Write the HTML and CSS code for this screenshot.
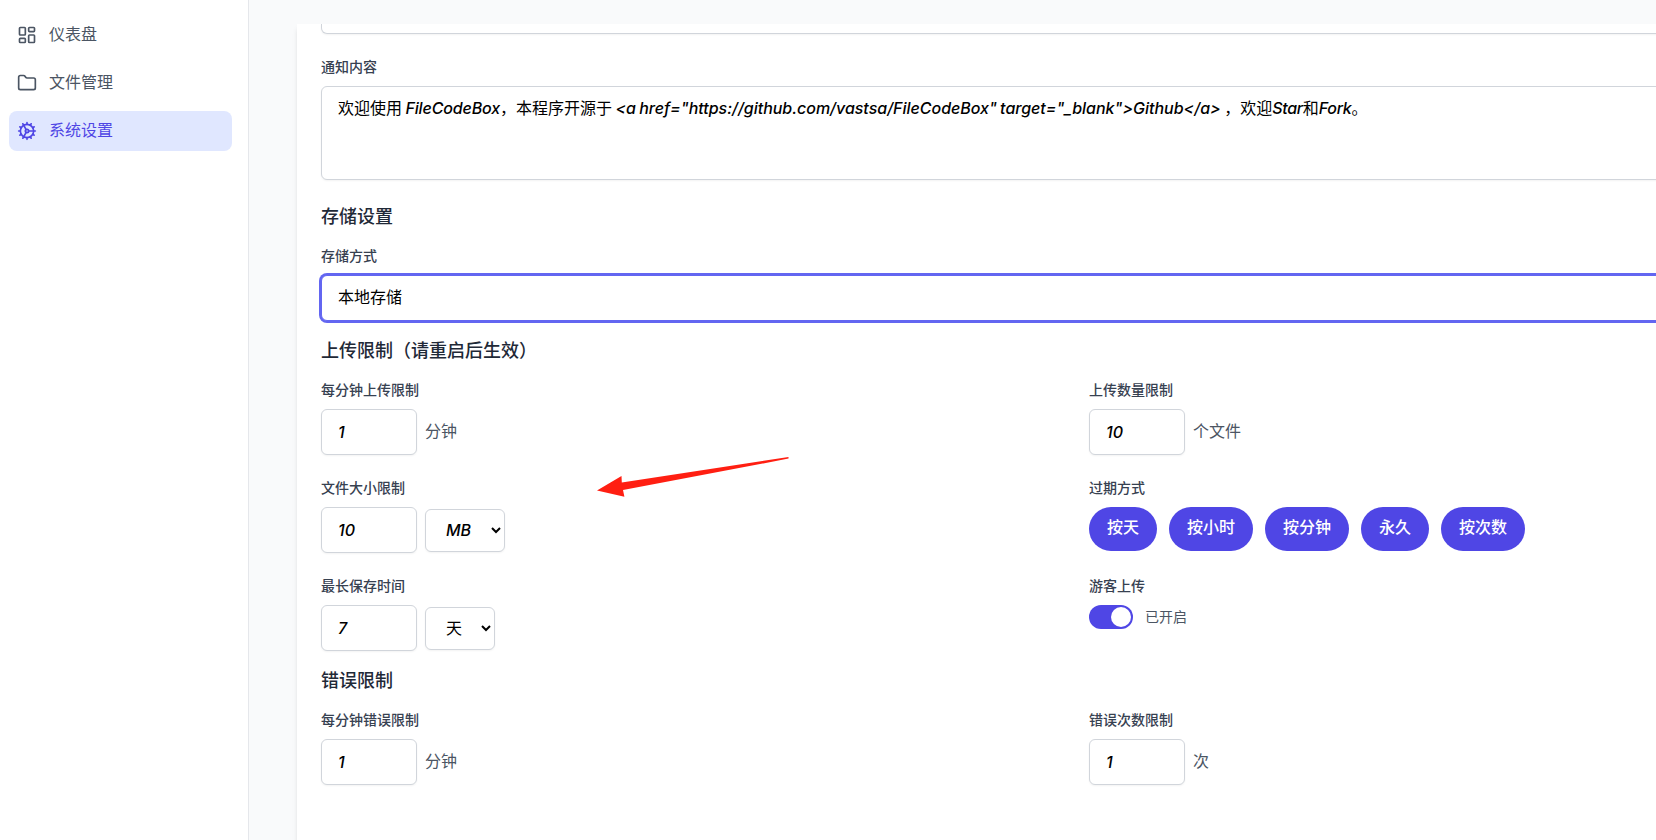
FILE: index.html
```html
<!DOCTYPE html>
<html lang="zh-CN">
<head>
    <meta charset="UTF-8">
    <meta name="viewport" content="width=device-width, initial-scale=1.0">
    <title>系统设置 - FileCodeBox</title>
    <link rel="stylesheet" href="styles.css">
</head>
<body>
    <div class="layout">
        <aside class="sidebar">
            <nav class="menu">
                <a class="menu-item">
                    <svg class="icon" viewBox="0 0 24 24">
                        <rect x="3" y="3" width="7" height="9" rx="1" />
                        <rect x="14" y="3" width="7" height="5" rx="1" />
                        <rect x="14" y="12" width="7" height="9" rx="1" />
                        <rect x="3" y="16" width="7" height="5" rx="1" />
                    </svg>
                    <span>仪表盘</span>
                </a>
                <a class="menu-item">
                    <svg class="icon" viewBox="0 0 24 24">
                        <path d="M20 20a2 2 0 0 0 2-2V8a2 2 0 0 0-2-2h-7.9a2 2 0 0 1-1.69-.9L9.6 3.9A2 2 0 0 0 7.93 3H4a2 2 0 0 0-2 2v13a2 2 0 0 0 2 2Z" />
                    </svg>
                    <span>文件管理</span>
                </a>
                <a class="menu-item active">
                    <svg class="icon" viewBox="0 0 24 24">
                        <path d="M12 20a8 8 0 1 0 0-16 8 8 0 0 0 0 16Z" />
                        <path d="M12 14a2 2 0 1 0 0-4 2 2 0 0 0 0 4Z" />
                        <path d="M12 2v2M12 22v-2M17 20.66l-1-1.73M11 10.27 7 3.34M20.66 17l-1.73-1M3.34 7l1.73 1M14 12h8M2 12h2M20.66 7l-1.73 1M3.34 17l1.73-1M17 3.34l-1 1.73M11 13.73l-4 6.93" />
                    </svg>
                    <span>系统设置</span>
                </a>
            </nav>
        </aside>

        <main class="content">
            <div class="card">
                <div class="input textarea-end"></div>

                <div class="field notice">
                    <label class="label">通知内容</label>
                    <div class="input textarea">欢迎使用 <span class="en en-name">FileCodeBox</span>，本程序开源于 <span class="en en-link">&lt;a href="https://github.com/vastsa/FileCodeBox" target="_blank"&gt;Github&lt;/a&gt;</span> ，欢迎<span class="en en-word">Star</span>和<span class="en en-word">Fork</span>。</div>
                </div>

                <h3 class="title">存储设置</h3>
                <div class="field">
                    <label class="label">存储方式</label>
                    <select class="input storage">
                        <option>本地存储</option>
                    </select>
                </div>

                <h3 class="title">上传限制（请重启后生效）</h3>
                <div class="grid">
                    <div class="field">
                        <label class="label">每分钟上传限制</label>
                        <div class="row">
                            <input class="input number" type="text" value="1">
                            <span class="unit">分钟</span>
                        </div>
                    </div>
                    <div class="field">
                        <label class="label">上传数量限制</label>
                        <div class="row">
                            <input class="input number" type="text" value="10">
                            <span class="unit">个文件</span>
                        </div>
                    </div>
                    <div class="field">
                        <label class="label">文件大小限制</label>
                        <div class="row">
                            <input class="input number" type="text" value="10">
                            <select class="input select size-unit">
                                <option>MB</option>
                            </select>
                        </div>
                    </div>
                    <div class="field">
                        <label class="label">过期方式</label>
                        <div class="chips">
                            <button class="chip">按天</button>
                            <button class="chip">按小时</button>
                            <button class="chip">按分钟</button>
                            <button class="chip">永久</button>
                            <button class="chip">按次数</button>
                        </div>
                    </div>
                    <div class="field">
                        <label class="label">最长保存时间</label>
                        <div class="row">
                            <input class="input number" type="text" value="7">
                            <select class="input select time-unit">
                                <option>天</option>
                            </select>
                        </div>
                    </div>
                    <div class="field">
                        <label class="label">游客上传</label>
                        <div class="switch-row">
                            <span class="switch"><span class="knob"></span></span>
                            <span class="switch-text">已开启</span>
                        </div>
                    </div>
                </div>

                <h3 class="title">错误限制</h3>
                <div class="grid">
                    <div class="field">
                        <label class="label">每分钟错误限制</label>
                        <div class="row">
                            <input class="input number" type="text" value="1">
                            <span class="unit">分钟</span>
                        </div>
                    </div>
                    <div class="field">
                        <label class="label">错误次数限制</label>
                        <div class="row">
                            <input class="input number" type="text" value="1">
                            <span class="unit">次</span>
                        </div>
                    </div>
                </div>
            </div>
        </main>
    </div>

    <!-- red pointer drawn over the form -->
    <svg class="arrow" viewBox="0 0 192 42">
        <polygon points="0,34.5 24.5,20 24.8,26.5 191.5,1 191.5,2.6 26,34 27.4,40.8" />
    </svg>
</body>
</html>
```

FILE: styles.css
```css
* {
    box-sizing: border-box;
}

body {
    margin: 0;
    height: 840px;
    overflow: hidden;
    font-family: "Liberation Sans", "Noto Sans CJK SC", sans-serif;
    font-size: 16px;
    line-height: 24px;
    color: #000;
    background-color: #f9fafb;
}

.layout {
    display: flex;
    height: 840px;
}

/* sidebar */
.sidebar {
    flex: 0 0 249px;
    padding: 15px 16px 0 9px;
    background-color: #fff;
    border-right: 1px solid #e5e7eb;
}

.menu {
    display: flex;
    flex-direction: column;
    gap: 8px;
}

.menu-item {
    display: flex;
    align-items: center;
    gap: 12px;
    height: 40px;
    padding: 0 8px;
    border-radius: 8px;
    color: #4b5563;
}

.menu-item.active {
    color: #4f46e5;
    background-color: #e0e7ff;
}

.icon {
    width: 20px;
    height: 20px;
    fill: none;
    stroke: currentColor;
    stroke-width: 2;
    stroke-linecap: round;
    stroke-linejoin: round;
}

/* main area */
.content {
    flex: 1;
    min-width: 0;
    margin-top: 24px;
    padding-left: 48px;
    overflow: hidden;
}

.card {
    width: 1560px;
    height: 900px;
    padding: 0 24px;
    background-color: #fff;
    box-shadow: 0 4px 6px -1px rgba(0, 0, 0, 0.1), 0 2px 4px -2px rgba(0, 0, 0, 0.1);
}

.label {
    display: block;
    margin-bottom: 10px;
    font-size: 14px;
    font-weight: 500;
    line-height: 18px;
    color: #374151;
}

.title {
    margin: 16px 0;
    font-size: 18px;
    font-weight: 500;
    line-height: 28px;
    color: #1f2937;
}

.input {
    display: block;
    height: 46px;
    margin: 0;
    padding: 10px 16px;
    border: 1px solid #d1d5db;
    border-radius: 6px;
    outline: none;
    background-color: #fff;
    box-shadow: 0 1px 2px rgba(0, 0, 0, 0.05);
    font-family: Inter, "Noto Sans CJK SC", sans-serif;
    font-size: 16px;
    line-height: 24px;
    color: #000;
}

.textarea-end {
    height: 10px;
    padding: 0;
    border-top: 0;
    border-radius: 0 0 6px 6px;
}

.notice {
    margin: 24px 0 23px;
}

.textarea {
    height: 94px;
    white-space: nowrap;
    word-spacing: -1px;
    font-family: "Liberation Sans", "Noto Sans CJK SC", sans-serif;
}

.en {
    font-family: Inter, sans-serif;
    font-style: italic;
    font-weight: 500;
    line-height: 1;
}

.en-name {
    letter-spacing: -0.15px;
}

.en-link {
    letter-spacing: -0.02px;
}

.en-word {
    letter-spacing: -0.3px;
}

.storage {
    width: 100%;
    padding: 8px 16px 10px;
    appearance: none;
    border-color: #6366f1;
    box-shadow: 0 0 0 2px #6366f1;
}

.grid {
    display: grid;
    grid-template-columns: 1fr 1fr;
    gap: 24px;
}

.row {
    display: flex;
    align-items: center;
    gap: 8px;
    height: 46px;
}

.number {
    width: 96px;
    font-style: italic;
    font-weight: 500;
}

.unit {
    color: #4b5563;
}

.select {
    height: 43px;
    padding: 8px 0 8px 16px;
    font-style: italic;
    font-weight: 500;
}

.size-unit {
    width: 80px;
}

.time-unit {
    width: 70px;
    font-style: normal;
    font-weight: 400;
}

.chips {
    display: flex;
    gap: 12px;
}

.chip {
    height: 44px;
    padding: 0 18px 2px;
    border: 0;
    border-radius: 22px;
    background-color: #4f46e5;
    font-family: "Liberation Sans", "Noto Sans CJK SC", sans-serif;
    font-size: 16px;
    font-weight: 500;
    line-height: 24px;
    color: #fff;
}

.switch-row {
    display: flex;
    align-items: center;
    gap: 12px;
}

.switch {
    display: flex;
    justify-content: flex-end;
    width: 44px;
    height: 24px;
    padding: 2px;
    border-radius: 12px;
    background-color: #4f46e5;
}

.knob {
    width: 20px;
    height: 20px;
    border-radius: 50%;
    background-color: #fff;
}

.switch-text {
    font-size: 14px;
    color: #4b5563;
}

.arrow {
    position: absolute;
    left: 597px;
    top: 456px;
    width: 192px;
    height: 42px;
    fill: #ff1f12;
}
```
